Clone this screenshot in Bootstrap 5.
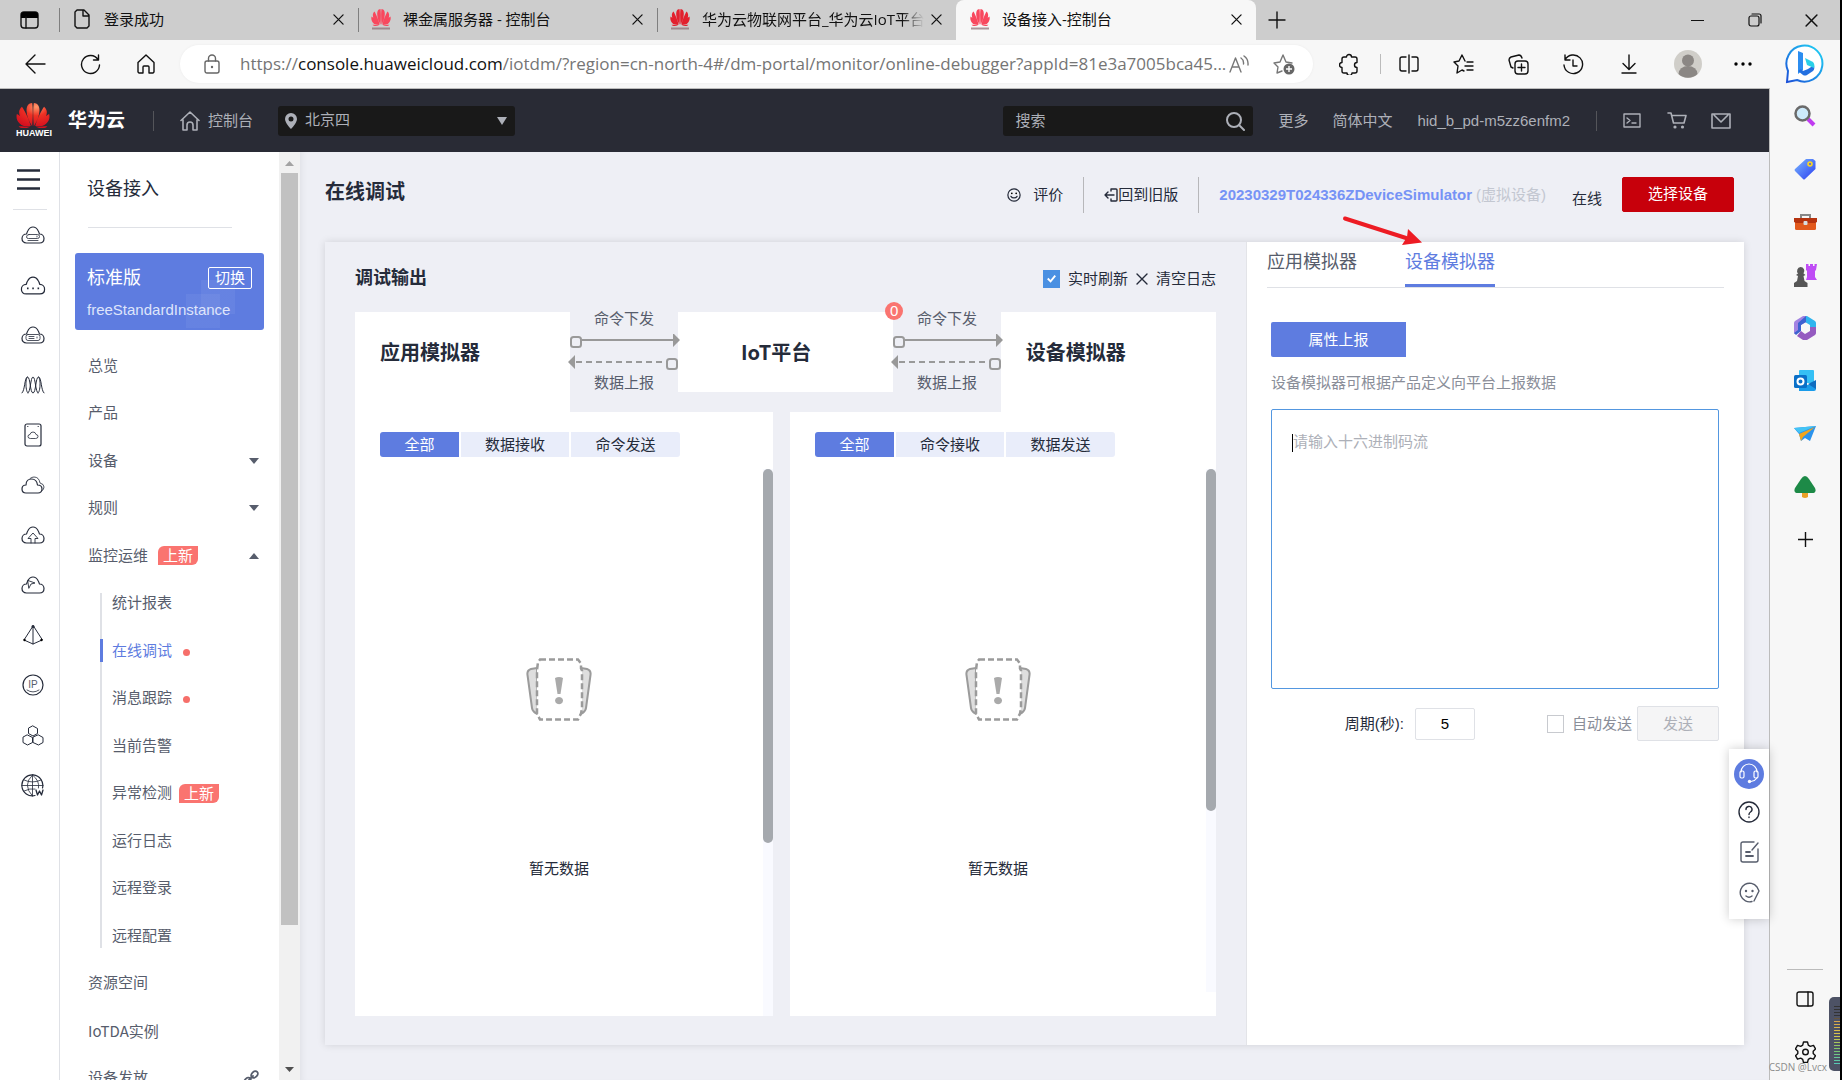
<!DOCTYPE html>
<html lang="zh-CN">
<head>
<meta charset="utf-8">
<meta name="viewport" content="width=device-width, initial-scale=1">
<title>设备接入-控制台</title>
<link href="https://cdn.jsdelivr.net/npm/bootstrap@5.3.0/dist/css/bootstrap.min.css" rel="stylesheet">
<style>
:root{--brand:#5e7ce0;--ink:#252b3a;--mute:#575d6c;--line:#dfe1e6;--page:#eeeff5}
body{font-family:"Liberation Sans","Noto Sans CJK SC",sans-serif;font-size:15px;line-height:20px;color:var(--ink);background:#f7f7f7;border-right:2px solid #000;height:100vh;overflow:hidden}
a{color:inherit;text-decoration:none}
svg{display:block;flex:none}
.ln{fill:none;stroke:currentColor;stroke-linecap:round;stroke-linejoin:round}
.ln:not([stroke-width]){stroke-width:1.4}
.plain{border:0;background:none;padding:0;color:inherit;display:flex;align-items:center;justify-content:center}
.chrome-ui{font-family:"Open Sans","Noto Sans CJK SC",sans-serif;color:#111}
.tabstrip{height:40px;background:#cdcdcd}
.ws-btn{width:59px}
.vsep{width:1px;background:#7f7f7f;flex:none}
.tab-item{width:298px;height:40px;padding:0 10px 2px 12px;gap:12px}
.tab-item span{flex:1;white-space:nowrap;overflow:hidden}
.tab-item.tab-long span{margin-right:-10px;-webkit-mask-image:linear-gradient(90deg,#000 90%,transparent)}
.tab-item.tab-on{width:300px;padding-left:14px;background:#f7f7f7;border-radius:8px 8px 0 0}
.tab-item .plain{width:20px;height:20px}
.new-tab{padding:0 12px}
.win-btn{width:57px}
.toolbar{height:48px;background:#f7f7f7}
.tool{width:55px;height:48px;flex:none}
.omni{height:38px;border-radius:19px;background:#fff;box-shadow:0 0 3px #0000000d;margin:0 8px 0 7px;min-width:0;padding:0 18px 0 24px}
.omni-text{font-size:17px;color:#757575;white-space:nowrap;overflow:hidden;flex:1;margin-left:20px;line-height:24px}
.omni-text b{font-weight:400;color:#111}
.web{border-top:1px solid #bcbcbc;border-right:1px solid #bcbcbc;min-width:0;position:relative}
.topbar{height:63px;background:#292b35;color:#adb0b8}
.brand-mark{width:34px;margin-left:16px;color:#fff;font-size:9px;font-weight:700;line-height:10px;text-align:center}
.brand-name{color:#fff;font-size:19px;font-weight:700;margin-left:18px}
.region{position:relative;width:237px;height:30px;margin-left:25px}
.region select,.search input{width:100%;height:30px;background:#191919;border:0;border-radius:3px;color:#adb0b8;appearance:none;outline:0}
.region select{padding:0 0 1px 27px}
.search{position:relative;width:250px;height:30px}
.search input{padding:0 40px 0 12px}
.search input::placeholder{color:#adb0b8}
.over{position:absolute;pointer-events:none}
.pin{left:7px;top:7px}.caret{right:8px;top:11px}.mag{right:8px;top:6px}
.bar20{height:20px;opacity:.5}
.rail{width:60px;background:#fff;border-right:1px solid var(--line);flex:none}
.rail-line{width:34px;height:1px;background:var(--line);margin:19px 0 0 13px}
.rail-list a{height:50px;display:flex;align-items:center;justify-content:center;padding-left:6px}
.side{width:219px;background:#fff;flex:none;overflow:hidden}
.side-title{font-size:18px;line-height:24px;padding:25px 0 0 27px;font-weight:400;margin:0}
.side-line{height:1px;background:var(--line);margin:26px 47px 25px 28px;flex:none}
.inst{margin:0 15px;height:77px;background:var(--brand);border-radius:3px;color:#fff;padding:12px 12px 0 12px;flex:none;background-image:linear-gradient(#ffffff0d,#ffffff0d),linear-gradient(#ffffff0d,#ffffff0d);background-size:34px 34px;background-repeat:no-repeat;background-position:126px 27px,111px 41px}
.inst-name{font-size:18px;line-height:26px}
.inst button{height:22px;border:1px solid #fff;border-radius:2px;background:none;color:#fff;padding:0 6px;line-height:18px}
.inst-id{color:#dfe5fb;line-height:20px;margin-top:9px}
.menu{height:760px;margin-top:12px;color:var(--mute);flex:none}
.menu li{flex:1}
.menu a{display:flex;align-items:center;height:100%;padding:0 20px 0 28px}
.menu .subs{flex:8;background:linear-gradient(var(--line),var(--line)) 40px 13px/2px calc(100% - 25px) no-repeat}
.menu .subs a{padding:0 0 0 40px}
.subs a span{display:inline-flex;align-items:center;height:23px;padding-left:12px}
.subs .now span{color:var(--brand);border-left:3px solid var(--brand);padding-left:9px}
.newtag{background:#fa7470;color:#fff;border-radius:6px 0 6px 0;width:40px;text-align:center;font-style:normal;line-height:19px;margin-left:10px}
.subs .newtag{margin-left:7px}
.reddot{width:7px;height:7px;border-radius:50%;background:#f66f6a;margin:3px 0 0 11px}
.mixed{font-family:"Noto Sans CJK SC",sans-serif}
.sbar{width:21px;background:#f1f1f1;flex:none;padding:0 2px}
.sbar-thumb{flex:none;height:81%;background:#c1c1c1}
.stage{background:var(--page);box-shadow:inset 6px 0 6px -4px #0000000f;padding:0 25px 35px 25px;min-width:0}
.stage-head{height:90px;padding-right:10px}
.stage-title{font-size:20px;font-weight:700;line-height:28px;margin:26px 0 0}
.head-tools{padding-top:25px}
.head-tools>*{height:36px;display:flex;align-items:center}
.head-sep{margin:0 20px;opacity:.5}
.devname{color:#7693f5;font-weight:700}
.state{padding:8px 20px 0 26px}
.btn-pick{--bs-btn-bg:#c7000b;--bs-btn-color:#fff;--bs-btn-border-color:#c7000b;--bs-btn-hover-bg:#b00009;--bs-btn-hover-color:#fff;width:112px;height:35px;border-radius:2px;font-size:15px;line-height:20px;justify-content:center;padding:0 0 2px}
.board{box-shadow:0 0 8px #0000001f;min-height:0}
.out{padding:0 30px 29px;min-width:0}
.out-head{height:70px;padding-top:4px}
.out-title{font-size:18px;font-weight:700;margin:0}
.tick{appearance:none;width:17px;height:18px;margin:0;border:1px solid #c8cacf;background:#fff;flex:none}
.tick:checked{border-color:#4a90e2;background:#4a90e2 url("data:image/svg+xml,%3Csvg xmlns='http://www.w3.org/2000/svg' viewBox='0 0 16 16'%3E%3Cpath d='M4 8l3 3 5-6' fill='none' stroke='white' stroke-width='2'/%3E%3C/svg%3E")}
.lane{height:100px}
.lane>div{flex:2;min-width:0}
.lane>.link-cell{flex:1;color:var(--mute);text-align:center;position:relative}
.node{background:#fff;font-size:20px;font-weight:700;line-height:82px;text-indent:25px}
.node.mixed{text-indent:63px;line-height:80px}
.link-cell svg{position:relative;margin:5px 0 3px -2px;z-index:1}
.link-cell p{margin:0;line-height:20px}
.link-cell p:first-of-type{margin-top:-3px}
.count{position:absolute;z-index:2;left:-8px;top:-10px;width:18px;height:18px;border-radius:9px;background:#fa7470;color:#fff;line-height:18px}
.pane{background:#fff;min-width:0}
.seg{gap:2px;padding:20px 0 12px 25px}
.seg button{width:108px;height:25px;border:0;background:#e9edfa;color:var(--ink);line-height:20px;padding:0}
.seg button:first-child{width:79px;background:var(--brand);color:#fff;border-radius:3px 0 0 3px}
.seg button:last-child{width:109px;border-radius:0 3px 3px 0}
.hollow{padding-top:189px}
.hollow p{margin:138px 0 0}
.track{width:10px;background:#f9faff;flex:none}
.track i{display:block;background:#a5a9ae;border-radius:5px}
.sim{flex:0 0 498px;background:#fff;border-left:1px solid #e3e4e8;padding:0 20px}
.sim-tabs{height:46px;border-bottom:1px solid var(--line);gap:48px;font-size:18px;color:var(--mute)}
.sim-tabs a{height:45px;line-height:40px}
.sim-tabs .now{color:var(--brand);border-bottom:3px solid var(--brand)}
.sim-body{padding:34px 5px 0 4px}
.btn-rep{background:var(--brand);color:#fff;width:135px;height:35px;border:0;border-radius:2px 0 0 2px}
.hint{color:#8a8e99;margin:16px 0}
.code{width:100%;height:280px;border:1px solid #5397e0;border-radius:2px;padding:22px 21px;resize:none;outline:0;display:block}
.code::placeholder{color:#adb0b8}
.cursor{position:absolute;left:21px;top:25px;width:1px;height:18px;background:#000}
.sendrow{margin-top:17px;height:35px}
.secs{width:60px;height:32px;border:1px solid var(--line);border-radius:2px;text-align:center;margin:0 72px 0 11px}
.btn-off{width:82px;height:35px;border:1px solid var(--line);border-radius:2px;background:#f5f5f6;color:#adb0b8;margin-left:5px}
.dock{position:absolute;right:0;top:660px;width:40px;height:170px;background:#fff;box-shadow:0 0 10px #0003;padding-top:9px}
.dock button{height:40px;width:40px}
.dock .first{height:32px;margin-bottom:2px}
.point{position:absolute;left:1342px;top:126px;pointer-events:none}
.apps{width:70px;flex:none;position:relative;padding:1px 0 2px}
.apps button{width:70px;height:53px;flex:none}
.apps-line{width:36px;height:1px;background:#bbb;margin-bottom:2px}
.csdn{position:absolute;right:13px;bottom:6px;font-size:10px;line-height:14px;color:#8c8c8c;white-space:nowrap}
.meter{position:absolute;right:-2px;bottom:9px;width:13px;height:74px;border-radius:5px 0 0 5px;background:#4d5265;padding:9px 2px 7px 5px}
.meter div{height:100%;background:repeating-linear-gradient(#4d526500 0 1px,#4d5265 1px 3px),linear-gradient(#333 20%,#d8a24a 25%,#d8c84a 50%,#7cc76a 75%,#55c9b8)}
</style>
</head>
<body class="d-flex flex-column">
<svg width="0" height="0" class="position-absolute" aria-hidden="true">
  <defs>
    <radialGradient id="glow" cx="60%" cy="15%" r="80%"><stop offset="0" stop-color="#ff9a6c"/><stop offset=".45" stop-color="#ee3124"/><stop offset="1" stop-color="#d5111f"/></radialGradient>
    <linearGradient id="bl" x1="0" y1="0" x2="1" y2="1"><stop offset="0" stop-color="#7ab8ff"/><stop offset="1" stop-color="#2a3cf0"/></linearGradient>
    <linearGradient id="cy" x1="1" y1="0" x2="0" y2="1"><stop offset="0" stop-color="#20d5f5"/><stop offset="1" stop-color="#1b4fd8"/></linearGradient>
    <symbol id="petals" viewBox="0 0 40 27" preserveAspectRatio="none">
      <path d="M19 25C14 18 11 10 13 4c1-3 4-4 6-4 1 5 1 15 0 25zM21 25c5-7 8-15 6-21-1-3-4-4-6-4-1 5-1 15 0 25zM17.500 25C15 17 10 8 7 4 3 7 3 11 5 15c3 5 7 8 12.500 10zM22.500 25C25 17 30 8 33 4c4 3 4 7 2 11-3 5-7 8-12.500 10zM16.500 25.500C12 20 5 14 1 12c-1 4 0 7 3 10 3 3 7 3.500 12.500 3.500zM23.500 25.500C28 20 35 14 39 12c1 4 0 7-3 10-3 3-7 3.500-12.500 3.500zM16 26.500c-5-1-9-1.500-13-1.500 2 2 5 3 13 1.500zM24 26.500c5-1 9-1.500 13-1.500-2 2-5 3-13 1.500z"/>
    </symbol>
    <symbol id="fav" viewBox="0 0 20 22"><use href="#petals" width="20" height="17" y="1"/><path fill="#8a6a70" d="M1 19.500h18v2H1z" opacity=".7"/></symbol>
    <symbol id="x" viewBox="0 0 12 12"><path class="ln" d="M1 1l10 10M11 1L1 11"/></symbol>
    <symbol id="cloud" viewBox="0 0 24 18"><path class="ln" stroke-width="1.200" d="M5.500 17C2.500 17 1 15 1 12.500 1 10 2.800 8 5.500 8 6 7 6 6 7 4.500 8 2.500 10 1 12 1s4 1.500 5 3.500C18 6 18 7 18.500 8c2.700 0 4.500 2 4.500 4.500S21.500 17 18.500 17z"/></symbol>
    <symbol id="smile" viewBox="0 0 16 16"><circle class="ln" cx="8" cy="8" r="7"/><path class="ln" d="M4.500 9.500c1.500 2.500 5.500 2.500 7 0"/><circle cx="5.500" cy="6" r="1"/><circle cx="10.500" cy="6" r="1"/></symbol>
    <symbol id="empty" viewBox="0 0 66 63">
      <path d="M11 10L5 11c-3 1-4 3-3.500 6L6 50c.5 4 3 5 6 6zM55 10l6 1c3 1 4 3 3.500 6L60 50c-.5 4-3 5-6 6z" fill="#dedede" stroke="#9b9b9b" stroke-width="2"/>
      <path d="M14 1.500h38l3 4v5l1 2v38l-1 5-3 6H14l-3-6V12l1-8z" fill="#fff" stroke="#9b9b9b" stroke-width="2.500" stroke-dasharray="6 3"/>
      <path d="M29 20q4-2 8 0l-2.500 16h-3zM33 39a4 3.600 0 1 0 .1 0z" fill="#aaa"/>
    </symbol>
    <symbol id="flow" viewBox="0 0 112 36">
      <g fill="none" stroke="#999" stroke-width="2"><rect x="3" y="3" width="10" height="10" rx="2.500"/><path d="M14 6h91"/><path d="M8 28h91" stroke-dasharray="6 4"/><rect x="99" y="25" width="10" height="10" rx="2.500" fill="#eeeff5"/></g>
      <path d="M105-1l7 7-7 7zM7 21l-7 7 7 7z" fill="#999"/>
    </symbol>
  </defs>
</svg>

<header class="tabstrip chrome-ui d-flex align-items-end flex-shrink-0">
  <button class="plain ws-btn h-100" aria-label="工作区"><svg width="19" height="18" viewBox="0 0 19 18"><rect class="ln" x="1" y="1" width="17" height="16" rx="3"/><path d="M1 5V3l2-2h13l2 2v2zM1 4h17v3H1z"/><path class="ln" d="M6 6v11"/></svg></button>
  <i class="vsep my-2 align-self-stretch"></i>
  <div class="tab-item d-flex align-items-center"><svg width="20" height="20" viewBox="0 0 20 20"><path class="ln" d="M5 1h7l5 5v11l-2 2H5l-2-2V3zM11 1v6h6"/></svg><span>登录成功</span><button class="plain" aria-label="关闭"><svg width="11" height="11"><use href="#x"/></svg></button></div>
  <i class="vsep my-2 align-self-stretch"></i>
  <div class="tab-item d-flex align-items-center"><svg width="20" height="22" fill="#f8485e"><use href="#fav"/></svg><span>裸金属服务器 - 控制台</span><button class="plain" aria-label="关闭"><svg width="11" height="11"><use href="#x"/></svg></button></div>
  <i class="vsep my-2 align-self-stretch"></i>
  <div class="tab-item tab-long d-flex align-items-center"><svg width="20" height="22" fill="#e2202e"><use href="#fav"/></svg><span>华为云物联网平台_华为云IoT平台</span><button class="plain" aria-label="关闭"><svg width="11" height="11"><use href="#x"/></svg></button></div>
  <div class="tab-item tab-on d-flex align-items-center"><svg width="20" height="22" fill="#f8485e"><use href="#fav"/></svg><span>设备接入-控制台</span><button class="plain" aria-label="关闭"><svg width="11" height="11"><use href="#x"/></svg></button></div>
  <button class="plain new-tab h-100" aria-label="新建标签页"><svg width="18" height="18" viewBox="0 0 18 18"><path class="ln" d="M9 1v16M1 9h16"/></svg></button>
  <div class="d-flex ms-auto h-100">
    <button class="plain win-btn" aria-label="最小化"><svg width="13" height="13"><path class="ln" stroke-width="1" d="M0 6.500h13"/></svg></button>
    <button class="plain win-btn" aria-label="还原"><svg width="14" height="14" viewBox="0 0 14 14"><rect class="ln" stroke-width="1.200" x="1" y="3" width="10" height="10" rx="2"/><path class="ln" stroke-width="1.200" d="M4 1h7q2 0 2 2v7"/></svg></button>
    <button class="plain win-btn" aria-label="关闭窗口"><svg width="13" height="13"><use href="#x"/></svg></button>
  </div>
</header>

<div class="toolbar chrome-ui d-flex align-items-center flex-shrink-0 ps-2">
  <button class="plain tool" aria-label="后退"><svg width="21" height="20" viewBox="0 0 21 20"><path class="ln" d="M10 1L1 10l9 9M1 10h19"/></svg></button>
  <button class="plain tool" aria-label="刷新"><svg width="21" height="21" viewBox="0 0 21 21"><path class="ln" d="M18 5.500A9 9 0 1 0 19.500 11M18.500 1v5h-5"/></svg></button>
  <button class="plain tool" aria-label="主页"><svg width="20" height="20" viewBox="0 0 20 20"><path class="ln" d="M2 8.500L10 1l8 7.500V18l-1 1h-4v-6q0-1-1-1h-4q-1 0-1 1v6H3l-1-1z"/></svg></button>
  <div class="omni d-flex align-items-center flex-fill">
    <svg width="16" height="20" viewBox="0 0 16 20" color="#666"><rect class="ln" x="1" y="7" width="14" height="12" rx="2"/><path class="ln" d="M4.500 7V4.500a3.500 3.500 0 0 1 7 0V7"/><circle cx="8" cy="13" r="1.200" fill="#666"/></svg>
    <div class="omni-text" role="textbox" aria-label="地址栏">https://<b>console.huaweicloud.com</b>/iotdm/?region=cn-north-4#/dm-portal/monitor/online-debugger?appId=81e3a7005bca45...</div>
    <svg width="20" height="18" viewBox="0 0 20 18" color="#777"><path class="ln" d="M1 17L6.500 3 12 17M3 12h7M12 3q3 2 2.500 6M15 1q4.500 3 4 9"/></svg>
    <svg width="22" height="22" viewBox="0 0 22 22" color="#777" class="ms-4"><path class="ln" d="M9 18l-5 2 1-6-4-4 6-1 3-7 3 7 6 1"/><circle cx="16" cy="16" r="5.500" fill="#666"/><path d="M16 13v6M13 16h6" stroke="#fff" stroke-width="1.400"/></svg>
  </div>
  <button class="plain tool" aria-label="扩展"><svg width="20" height="22" viewBox="0 0 20 22"><path class="ln" d="M5 4h2.500a2.500 2.500 0 1 1 5 0H16q2 0 2 2v3.500a2.200 2.200 0 0 0 0 5V18q0 2-2 2h-3a2.500 2.500 0 0 1-5 0H5q-2 0-2-2v-3.500a2.500 2.500 0 1 1 0-5V6q0-2 2-2z"/></svg></button>
  <i class="vsep bar20 ms-1 me-0"></i>
  <button class="plain tool" aria-label="分屏"><svg width="20" height="20" viewBox="0 0 20 20"><path class="ln" d="M10 1v18M7 3H3q-2 0-2 2v10q0 2 2 2h4M13 3h4q2 0 2 2v10q0 2-2 2h-4"/></svg></button>
  <button class="plain tool" aria-label="收藏夹"><svg width="21" height="20" viewBox="0 0 21 20"><path class="ln" d="M12 7L9 1 6 7 1 8l4 4-1 7 5-3 2 1M14 8h6M12 12h8M14 16h6"/></svg></button>
  <button class="plain tool" aria-label="集锦"><svg width="21" height="21" viewBox="0 0 21 21"><rect class="ln" x="7" y="7" width="13" height="13" rx="3"/><path class="ln" d="M13.500 10v7M10 13.500h7M5 14L3 13 1 6q0-2 2-3l8-2q2 0 3 3"/></svg></button>
  <button class="plain tool" aria-label="历史记录"><svg width="21" height="21" viewBox="0 0 21 21"><path class="ln" d="M2 6A9.300 9.300 0 1 1 1 11M2 1v5h5M10 6v6h4"/></svg></button>
  <button class="plain tool me-1" aria-label="下载"><svg width="16" height="20" viewBox="0 0 16 20"><path class="ln" d="M8 1v14M2 9.500L8 15.500l6-6M1 19h14"/></svg></button>
  <button class="plain tool" aria-label="个人资料"><svg width="28" height="28" viewBox="0 0 28 28"><circle cx="14" cy="14" r="14" fill="#d0cec9"/><circle cx="14" cy="10.500" r="6" fill="#8b8784"/><path d="M4.500 24a9.500 8 0 0 1 19 0 14 14 0 0 1-19 0z" fill="#8b8784"/></svg></button>
  <button class="plain tool" aria-label="更多操作"><svg width="18" height="4" viewBox="0 0 18 4"><circle cx="2" cy="2" r="1.700"/><circle cx="9" cy="2" r="1.700"/><circle cx="16" cy="2" r="1.700"/></svg></button>
  <button class="plain apps p-0" aria-label="必应"><svg width="40" height="40" viewBox="0 0 40 40"><path d="M2 38L3 27A18 18 0 1 1 12 36z" fill="#fff" stroke="url(#cy)" stroke-width="2"/><path d="M13 7l5 2v17l-5 4z" fill="#2c8df0"/><path d="M13 27l5 4q2 1 4 0l6-4q2-2 1-6l-6 4-5 2-2-2z" fill="#2470e0"/><path d="M20 14l8 4q2 2 1 6l-7-3z" fill="#2ad0e8"/></svg></button>
</div>

<div class="d-flex flex-fill overflow-hidden">
<div class="web d-flex flex-column flex-fill">
  <nav class="topbar d-flex align-items-center flex-shrink-0" aria-label="华为云">
    <a href="#" class="brand-mark"><svg width="34" height="25" fill="url(#glow)"><use href="#petals"/></svg>HUAWEI</a>
    <a href="#" class="brand-name">华为云</a>
    <i class="vsep bar20" style="margin-left:28px"></i>
    <a href="#" class="d-flex align-items-center gap-2" style="margin-left:26px"><svg width="20" height="20" viewBox="0 0 20 20"><path class="ln" stroke-width="1.600" d="M1 9.500L10 1l9 8.500M3 8.500V19h4v-5a3 3 0 0 1 6 0v5h4V8.500"/></svg>控制台</a>
    <div class="region">
      <select aria-label="区域"><option>北京四</option></select>
      <svg class="over pin" width="12" height="16" viewBox="0 0 12 16"><path fill="#adb0b8" fill-rule="evenodd" d="M6 0a6 6 0 0 1 6 6c0 4-6 10-6 10S0 10 0 6a6 6 0 0 1 6-6zm0 3.500a2.500 2.500 0 1 0 0 5 2.500 2.500 0 0 0 0-5z"/></svg>
      <svg class="over caret" width="10" height="8"><path d="M0 0h10L5 8z" fill="#adb0b8"/></svg>
    </div>
    <div class="d-flex align-items-center ms-auto" style="margin-right:38px">
      <div class="search"><input type="search" placeholder="搜索" aria-label="搜索"><svg class="over mag" width="19" height="19" viewBox="0 0 19 19"><circle class="ln" cx="8" cy="8" r="7" stroke-width="2"/><path class="ln" stroke-width="2" d="M13 13l5 5"/></svg></div>
      <a href="#" style="margin-left:25px">更多</a><a href="#" class="ms-4">简体中文</a><a href="#" style="margin-left:25px">hid_b_pd-m5zz6enfm2</a>
      <i class="vsep bar20" style="margin:0 26px"></i>
      <a href="#" aria-label="CloudShell"><svg width="18" height="15" viewBox="0 0 18 15"><path class="ln" d="M1 1h16v13H1zM4 5l3 2.500L4 10M9 10h4"/></svg></a>
      <a href="#" aria-label="购物车" style="margin-left:26px"><svg width="20" height="17" viewBox="0 0 20 17"><path class="ln" stroke-width="1.600" d="M1 1h3l2.500 10H17l2-7.500H5"/><circle cx="8" cy="15" r="1.600" fill="currentColor"/><circle cx="15.500" cy="15" r="1.600" fill="currentColor"/></svg></a>
      <a href="#" aria-label="消息" class="ms-4"><svg width="20" height="16" viewBox="0 0 20 16"><path class="ln" stroke-width="1.600" d="M1 1h18v14H1zM3 2l7 7 7-7"/></svg></a>
    </div>
  </nav>

  <div class="d-flex flex-fill overflow-hidden">
    <nav class="rail" aria-label="服务列表">
      <button class="plain" style="margin:17px 0 0 17px" aria-label="菜单"><svg width="23" height="21"><path d="M0 1.500h23M0 10.500h23M0 19.500h23" stroke="#252b3a" stroke-width="2.400"/></svg></button>
      <div class="rail-line"></div>
      <div class="rail-list">
        <a href="#" aria-label="弹性云服务器"><svg width="24" height="18" viewBox="0 0 24 18"><use href="#cloud"/><path class="ln" stroke-width=".8" d="M8 8.500h8.500q2 0 2 2t-2 2h-9q-2 0-2-1.500 0-2.500 2.500-2.500zM7 14.500h10M16 10v1"/></svg></a>
        <a href="#" aria-label="云耀云服务器"><svg width="26" height="19" viewBox="0 0 24 18"><use href="#cloud"/><path fill="#252b3a" d="M6.300 11h1.500v1.500H6.300zM11.300 11h1.500v1.500h-1.500zM16.300 11h1.500v1.500h-1.500z"/></svg></a>
        <a href="#" aria-label="裸金属服务器"><svg width="24" height="18" viewBox="0 0 24 18"><use href="#cloud"/><rect class="ln" stroke-width=".8" x="5" y="8.500" width="14" height="6" rx="2"/><path class="ln" stroke-width=".8" d="M8 10.500h5M8 12.500h5M16 11v1"/></svg></a>
        <a href="#" aria-label="弹性伸缩"><svg width="24" height="18" viewBox="0 0 24 18"><path class="ln" stroke-width="1" d="M1 17C4 15 3.500 1 6.500 1S9 17 12 17 14.500 1 17.500 1 20 15 23 17M7 17C4.500 17 4 1 6.500 1M7 17C9.500 17 9.500 1 12 1s2.500 16 5 16M17 17c2.500 0 3-16 .5-16"/></svg></a>
        <a href="#" aria-label="云硬盘"><svg width="18" height="24" viewBox="0 0 18 24"><rect class="ln" stroke-width="1.200" x="1" y="1" width="16" height="22" rx="2"/><path class="ln" stroke-width=".8" d="M6 15.500q-2 0-2-2t2-2q.5-2.500 3-2.500t3 2.500q2 0 2 2t-2 2zM3.500 3.500h.5M14 3.500h.5"/></svg></a>
        <a href="#" aria-label="云备份"><svg width="24" height="18" viewBox="0 0 24 18"><path class="ln" stroke-width="1.200" d="M5 17c-2.500 0-4-1.500-4-4s1.500-4 4-4c0-4 2.500-6 5.500-6S16 5 16.500 9c3 0 4.500 2 4.500 4s-1.500 4-4 4z"/><path class="ln" stroke-width=".8" d="M9 2.500q2-1.500 4-1.500 5 0 6 6 4 1 4 4 0 3-2.500 4"/></svg></a>
        <a href="#" aria-label="云存储网关"><svg width="24" height="18" viewBox="0 0 24 18"><use href="#cloud"/><path class="ln" stroke-width=".9" d="M10 17v-4.500H7L12 7l5 5.500h-3V17"/></svg></a>
        <a href="#" aria-label="内容分发"><svg width="24" height="18" viewBox="0 0 24 18"><use href="#cloud"/><path class="ln" stroke-width=".9" d="M7 4.500l7 2.500-4 1-2 4z"/></svg></a>
        <a href="#" aria-label="虚拟私有云"><svg width="20" height="20" viewBox="0 0 20 20"><path class="ln" stroke-width="1" d="M10 1L1 15l9 4 9-4zv18"/><circle cx="10" cy="1.500" r="1.500" fill="#252b3a"/><circle cx="1.500" cy="15" r="1.200"/><circle cx="18.500" cy="15" r="1.200"/></svg></a>
        <a href="#" aria-label="弹性公网IP"><svg width="22" height="22" viewBox="0 0 22 22"><circle class="ln" stroke-width="1.200" cx="11" cy="11" r="10"/><text x="11" y="14" font-size="10" text-anchor="middle" fill="#575d6c">IP</text><path class="ln" stroke-width=".8" d="M5 16q6 4 12 0"/></svg></a>
        <a href="#" aria-label="云容器"><svg width="22" height="21" viewBox="0 0 22 21"><path class="ln" stroke-width="1" d="M11 1l4.500 2.500v5L11 11 6.500 8.500v-5zM5.500 10l5 2.500v5l-5 2.500L1 17.500v-5zM16.500 10l4.500 2.500v5L16.500 20 11 17.500v-5z"/></svg></a>
        <a href="#" aria-label="域名"><svg width="23" height="23" viewBox="0 0 23 23"><path class="ln" stroke-width="1.200" d="M21.500 14A10.500 10.500 0 1 0 14 21.500"/><path class="ln" stroke-width=".8" d="M1 11.500h21M11.500 1v21M3 6q8.500 4 17 0M3 17q6-3 11-2M11.500 1Q1 11 11.500 22M11.500 1Q19 7 17.500 14"/><path class="ln" stroke-width="1.300" d="M15 16l1.500 5 2-4 2 4 1.500-5"/></svg></a>
      </div>
    </nav>

    <aside class="side d-flex flex-column">
      <h2 class="side-title">设备接入</h2>
      <div class="side-line"></div>
      <div class="inst">
        <div class="d-flex justify-content-between align-items-center"><span class="inst-name">标准版</span><button>切换</button></div>
        <div class="inst-id">freeStandardInstance</div>
      </div>
      <ul class="menu list-unstyled d-flex flex-column mb-0">
        <li><a href="#">总览</a></li>
        <li><a href="#">产品</a></li>
        <li><a href="#">设备<svg class="ms-auto" width="10" height="6"><path d="M0 0h10L5 6z" fill="#575d6c"/></svg></a></li>
        <li><a href="#">规则<svg class="ms-auto" width="10" height="6"><path d="M0 0h10L5 6z" fill="#575d6c"/></svg></a></li>
        <li><a href="#">监控运维<em class="newtag">上新</em><svg class="ms-auto" width="10" height="6"><path d="M0 6h10L5 0z" fill="#575d6c"/></svg></a></li>
        <li class="subs">
          <ul class="list-unstyled d-flex flex-column h-100">
            <li><a href="#"><span>统计报表</span></a></li>
            <li class="now"><a href="#"><span>在线调试</span><i class="reddot"></i></a></li>
            <li><a href="#"><span>消息跟踪</span><i class="reddot"></i></a></li>
            <li><a href="#"><span>当前告警</span></a></li>
            <li><a href="#"><span>异常检测</span><em class="newtag">上新</em></a></li>
            <li><a href="#"><span>运行日志</span></a></li>
            <li><a href="#"><span>远程登录</span></a></li>
            <li><a href="#"><span>远程配置</span></a></li>
          </ul>
        </li>
        <li><a href="#">资源空间</a></li>
        <li><a href="#" class="mixed">IoTDA实例</a></li>
        <li><a href="#">设备发放<svg class="ms-auto" width="16" height="16" viewBox="0 0 16 16"><ellipse class="ln" stroke-width="1.800" cx="4.500" cy="11" rx="3.800" ry="2.800" transform="rotate(-45 4.500 11)"/><ellipse class="ln" stroke-width="1.800" cx="11.500" cy="4.500" rx="3.800" ry="2.800" transform="rotate(-45 11.500 4.500)"/><path class="ln" stroke-width="1.800" d="M6 10l4-4"/></svg></a></li>
      </ul>
    </aside>
    <div class="sbar d-flex flex-column align-items-stretch">
      <svg width="17" height="21"><path d="M4 14h9L8.500 9z" fill="#a3a3a3"/></svg>
      <div class="sbar-thumb"></div>
      <svg class="mt-auto" width="17" height="21"><path d="M4 8h9l-4.500 5z" fill="#505050"/></svg>
    </div>

    <main class="stage d-flex flex-column flex-fill">
      <div class="stage-head d-flex justify-content-between flex-shrink-0">
        <h1 class="stage-title">在线调试</h1>
        <div class="head-tools d-flex">
          <a href="#"><svg width="14" height="14" class="me-2"><use href="#smile"/></svg><span class="ps-1">评价</span></a>
          <i class="vsep head-sep"></i>
          <a href="#"><svg width="14" height="14" viewBox="0 0 14 14"><path class="ln" d="M7 1h5q1 0 1 1v10q0 1-1 1H7M10 7H1M4 4L1 7l3 3M7 1v2M7 11v2"/></svg>回到旧版</a>
          <i class="vsep head-sep"></i>
          <a href="#"><span class="devname">20230329T024336ZDeviceSimulator</span><span class="ps-1" style="color:#c3c7d1">(虚拟设备)</span></a>
          <span class="state">在线</span>
          <button class="btn btn-pick">选择设备</button>
        </div>
      </div>

      <section class="board d-flex flex-fill">
        <div class="out d-flex flex-column flex-fill">
          <div class="out-head d-flex align-items-center justify-content-between flex-shrink-0">
            <h2 class="out-title">调试输出</h2>
            <div class="d-flex align-items-center">
              <input class="tick" type="checkbox" id="live" checked><label for="live" class="ms-2">实时刷新</label>
              <button class="plain ms-2"><svg width="12" height="12" class="me-2"><use href="#x"/></svg>清空日志</button>
            </div>
          </div>
          <div class="lane d-flex flex-shrink-0">
            <div class="node">应用模拟器</div>
            <div class="link-cell"><p>命令下发</p><svg width="112" height="36"><use href="#flow"/></svg><p>数据上报</p></div>
            <div class="node mixed align-self-start">IoT平台</div>
            <div class="link-cell"><span class="count">0</span><p>命令下发</p><svg width="112" height="36"><use href="#flow"/></svg><p>数据上报</p></div>
            <div class="node">设备模拟器</div>
          </div>
          <div class="d-flex flex-fill" style="gap:17px">
            <div class="pane d-flex flex-column" style="flex:418 1 0">
              <div class="seg d-flex"><button>全部</button><button>数据接收</button><button>命令发送</button></div>
              <div class="d-flex flex-fill">
                <div class="hollow flex-fill d-flex flex-column align-items-center"><svg width="66" height="63"><use href="#empty"/></svg><p>暂无数据</p></div>
                <div class="track"><i style="height:374px"></i></div>
              </div>
            </div>
            <div class="pane d-flex flex-column" style="flex:426 1 0">
              <div class="seg d-flex"><button>全部</button><button>命令接收</button><button>数据发送</button></div>
              <div class="d-flex flex-fill">
                <div class="hollow flex-fill d-flex flex-column align-items-center"><svg width="66" height="63"><use href="#empty"/></svg><p>暂无数据</p></div>
                <div class="track mb-4"><i style="height:342px"></i></div>
              </div>
            </div>
          </div>
        </div>

        <div class="sim">
          <nav class="sim-tabs d-flex"><a href="#">应用模拟器</a><a href="#" class="now">设备模拟器</a></nav>
          <div class="sim-body">
            <button class="btn-rep">属性上报</button>
            <p class="hint">设备模拟器可根据产品定义向平台上报数据</p>
            <div class="position-relative"><textarea class="code" placeholder="请输入十六进制码流" aria-label="十六进制码流"></textarea><i class="cursor"></i></div>
            <div class="sendrow d-flex align-items-center justify-content-end">
              <label for="secs">周期(秒):</label><input class="secs" id="secs" type="text" value="5">
              <input class="tick" type="checkbox" id="auto"><label for="auto" class="ms-2" style="color:#8a8e99">自动发送</label>
              <button class="btn-off" disabled>发送</button>
            </div>
          </div>
        </div>
      </section>
    </main>
  </div>

  <svg class="point" width="82" height="32" viewBox="0 0 82 32"><path d="M3 3.500L64 23" stroke="#ed1c24" stroke-width="4" stroke-linecap="round"/><path d="M80 27.500L66 14l-1 8-5 8z" fill="#ed1c24"/></svg>
  <div class="dock">
    <button class="plain first" aria-label="客服"><svg width="30" height="30" viewBox="0 0 30 30" color="#fff"><circle cx="15" cy="15" r="15" fill="#5e7ce0"/><path class="ln" stroke-width="1.200" d="M7 13a8 8 0 0 1 16 0M23 19q-2 3-6 3.500"/><rect class="ln" stroke-width="1.200" x="6" y="12" width="4" height="7" rx="1.500"/><rect class="ln" stroke-width="1.200" x="20" y="12" width="4" height="7" rx="1.500"/><circle cx="15.500" cy="22.500" r="1.700" fill="#fff"/></svg></button>
    <button class="plain" aria-label="帮助"><svg width="22" height="22" viewBox="0 0 22 22"><circle class="ln" cx="11" cy="11" r="10"/><path class="ln" d="M8 8.500a3 3 0 1 1 4.500 2.500q-1.500 1-1.500 2.500M11 16v.5"/></svg></button>
    <button class="plain" aria-label="建议"><svg width="19" height="22" viewBox="0 0 19 22" color="#575d6c"><path class="ln" d="M14 1H3Q1 1 1 3v16q0 2 2 2h13q2 0 2-2V8M18 2l-6 7"/><path class="ln" stroke-width="1.800" d="M6 11h4M6 15h7"/></svg></button>
    <button class="plain" aria-label="评价"><svg width="21" height="21" viewBox="0 0 21 21" color="#575d6c"><path class="ln" d="M13 19.500A9.300 9.300 0 1 1 18 5l2 4-5 10M7 14q3 2.500 6 0"/><circle cx="7" cy="9" r="1.200" fill="#575d6c"/><circle cx="13.500" cy="9" r="1.200" fill="#575d6c"/></svg></button>
  </div>
</div>

<aside class="apps chrome-ui d-flex flex-column align-items-center">
  <button class="plain" aria-label="搜索"><svg width="22" height="22" viewBox="0 0 22 22"><path d="M14 14l6 6" stroke="#c03cf0" stroke-width="4"/><circle cx="8.500" cy="8.500" r="7" fill="#cdeafb" stroke="#6a6a6a" stroke-width="2.500"/></svg></button>
  <button class="plain" aria-label="购物"><svg width="22" height="22" viewBox="0 0 22 22"><path d="M12 1h7l2.500 2v8L11 21q-1 1-2 0L1 13q-1-1 0-2z" fill="url(#bl)"/><circle cx="16" cy="6" r="2.800" fill="#f5d327"/><circle cx="16" cy="6" r="1" fill="#4a5be8"/></svg></button>
  <button class="plain" aria-label="工具"><svg width="23" height="18" viewBox="0 0 23 18"><path d="M7 6V2h9v4" fill="none" stroke="#888" stroke-width="2"/><rect x="1" y="5" width="21" height="12" rx="1.500" fill="#e2591c"/><path d="M0 5h23v4l-2 1H2L0 9z" fill="#b5330f"/><rect x="9.500" y="8" width="4" height="4" rx="1" fill="#d8dde0"/></svg></button>
  <button class="plain" aria-label="游戏"><svg width="24" height="24" viewBox="0 0 24 24"><path d="M13 1h2.500v2H17V1h3v2h1.500V1H24l-1 6-1 1v6l2 3H13l1-3V8l-1-1z" fill="#bf4cf5"/><path d="M7.500 4a4 4 0 0 1 3 6.500l2 1.500-2 1 1 5 3 2v4H1v-4l3-2 1-5-2-1 2-1.500A4 4 0 0 1 7.500 4z" fill="#565656"/></svg></button>
  <button class="plain" aria-label="Microsoft 365"><svg width="22" height="24" viewBox="0 0 22 24"><path d="M9 0h4l8 5q1 1 1 2v7l-6-2V9l-5-3z" fill="#2fb4ee"/><path d="M9 0L1 5Q0 6 0 7v9q0 2 1 2l6-3V9l5-3V0z" fill="#a383e2"/><path d="M12 0v6L7 9v6l-5 4-2-2 4-3V7z" fill="#3d62d0"/><path d="M22 11v6q0 1-1 2l-8 5H9l-6-4 4-5 4 3 5-3v-4z" fill="#955bc0"/></svg></button>
  <button class="plain" aria-label="Outlook"><svg width="22" height="21" viewBox="0 0 22 21"><path d="M5 1q0-1 1-1h13q1 0 1 1v12H5z" fill="#35c0f5"/><path d="M5 12l9 3 8-4v8q0 2-2 2H5z" fill="#1a9cea"/><path d="M14 14l8-4v9z" fill="#0f6cbf"/><rect y="5" width="13" height="13" rx="1.500" fill="#0a70c8"/><circle cx="6.500" cy="11.500" r="3" fill="none" stroke="#fff" stroke-width="2"/></svg></button>
  <button class="plain" aria-label="投放"><svg width="22" height="17" viewBox="0 0 22 17"><path d="M0 3L22 1 16 16l-5-3-4 3-2-7z" fill="#2c93ec"/><path d="M0 3l22-2L5 8z" fill="#43c4f5"/><path d="M5 9L21 2 9 12l-2 4z" fill="#f2a51c"/></svg></button>
  <button class="plain" aria-label="树"><svg width="22" height="22" viewBox="0 0 22 22"><path d="M8 16h6v5q-3 2-6 0z" fill="#eaa127"/><path d="M11 0q2 0 4 3l6 9q2 5-3 5H4q-5 0-3-5l6-9q2-3 4-3z" fill="#1d8a47"/></svg></button>
  <button class="plain" aria-label="添加"><svg width="15" height="15" viewBox="0 0 15 15"><path class="ln" d="M7.500 0v15M0 7.500h15"/></svg></button>
  <div class="apps-line mt-auto"></div>
  <button class="plain" aria-label="侧边栏"><svg width="18" height="16" viewBox="0 0 18 16"><rect class="ln" x="1" y="1" width="16" height="14" rx="2"/><path class="ln" d="M12 1v14"/></svg></button>
  <button class="plain" aria-label="设置"><svg width="21" height="22" viewBox="0 0 21 22"><path class="ln" d="M8.500 1h4l.8 3.200 2 1.200 3.200-1 2 3.500-2.300 2.300v2.200l2.300 2.300-2 3.500-3.200-1-2 1.200-.8 3.100h-4l-.8-3.100-2-1.200-3.200 1-2-3.500L2.800 12.400v-2.200L.5 7.900l2-3.500 3.200 1 2-1.200z"/><circle class="ln" cx="10.500" cy="11" r="2.800"/></svg></button>
  <span class="csdn">CSDN @Lvcx</span>
  <div class="meter"><div></div></div>
</aside>
</div>
<script src="https://cdn.jsdelivr.net/npm/bootstrap@5.3.0/dist/js/bootstrap.bundle.min.js"></script>
</body>
</html>
